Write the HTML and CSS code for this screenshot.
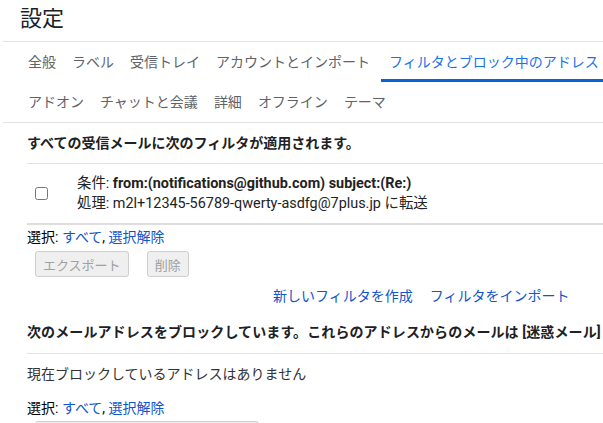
FILE: index.html
```html
<html>
<head>
    <title>設定</title>
    <link rel="stylesheet" href="styles.css">
</head>
<body>
    <div class="page">
    <h1 class="title">設定</h1>

    <div class="tabs">
        <div class="tab-row">
            <a class="tab">全般</a>
            <a class="tab">ラベル</a>
            <a class="tab">受信トレイ</a>
            <a class="tab">アカウントとインポート</a>
            <a class="tab active">フィルタとブロック中のアドレス</a>
        </div>
        <div class="tab-row">
            <a class="tab">アドオン</a>
            <a class="tab">チャットと会議</a>
            <a class="tab">詳細</a>
            <a class="tab">オフライン</a>
            <a class="tab">テーマ</a>
        </div>
    </div>

    <div class="content">
        <div class="section-head">すべての受信メールに次のフィルタが適用されます。</div>

        <div class="filter-row">
            <input type="checkbox" class="check">
            <div class="filter-text">
                <div>条件: <b>from:(notifications@github.com) subject:(Re:)</b></div>
                <div>処理: m2l+12345-56789-qwerty-asdfg@7plus.jp に転送</div>
            </div>
        </div>

        <div class="select-line">選択: <a class="link">すべて</a>, <a class="link">選択解除</a></div>
        <div class="buttons">
            <button class="btn" disabled>エクスポート</button>
            <button class="btn" disabled>削除</button>
        </div>

        <div class="links">
            <a class="link">新しいフィルタを作成</a>
            <a class="link">フィルタをインポート</a>
        </div>

        <div class="section-head blocked">次のメールアドレスをブロックしています。これらのアドレスからのメールは [迷惑メール]</div>

        <div class="empty">現在ブロックしているアドレスはありません</div>

        <div class="select-line second">選択: <a class="link">すべて</a>, <a class="link">選択解除</a></div>
        <div class="buttons second">
            <button class="btn" disabled>選択したアドレスのブロックを解除</button>
        </div>
    </div>
    </div>
</body>
</html>
```

FILE: styles.css
```css
body {
    margin: 0;
    overflow: hidden;
    background: #fff;
    font-family: Roboto, "Noto Sans CJK JP", sans-serif;
    color: #202124;
}

.page {
    width: 603px;
    height: 423px;
    overflow: hidden;
}

.title {
    margin: 0;
    height: 41px;
    padding-left: 20px;
    font-size: 22px;
    font-weight: normal;
    line-height: 37px;
    color: #202124;
}

/* tabs */
.tabs {
    margin-left: 3px;
    border-top: 1px solid #e3e3e3;
    border-bottom: 1px solid #e3e3e3;
}

.tab-row {
    display: flex;
    height: 40px;
    padding-left: 17px;
    white-space: nowrap;
}

.tab {
    display: flex;
    align-items: center;
    padding: 0 8px;
    font-size: 14px;
    color: #5f6368;
    border-bottom: 3px solid transparent;
    box-sizing: border-box;
}

.tab.active {
    margin-left: 3px;
    color: #1a73e8;
    border-bottom-color: #0b62d6;
}

/* filters */
.content {
    margin-left: 27px;
    font-size: 14px;
}

.section-head {
    height: 40px;
    line-height: 40px;
    font-weight: bold;
    white-space: nowrap;
    overflow: hidden;
    border-bottom: 1px solid #e3e3e3;
}

.filter-row {
    display: flex;
    align-items: center;
    height: 59px;
    border-bottom: 2px solid #dedede;
}

.check {
    width: 13px;
    height: 13px;
    margin: 0 29px 0 8px;
}

.filter-text {
    font-size: 14.4px;
    line-height: 20px;
    color: #222;
}

.select-line {
    padding-top: 3px;
    line-height: 18px;
    color: #000;
}

.link {
    color: #15c;
    cursor: pointer;
}

.buttons {
    display: flex;
    gap: 18px;
    margin-top: 5px;
    padding-left: 8px;
}

.btn {
    height: 26px;
    padding: 0 7px;
    font-family: Roboto, "Noto Sans CJK JP", sans-serif;
    font-size: 13px;
    color: #a0a0a0;
    background: #efefef;
    border: 1px solid #cfcfcf;
    border-radius: 3px;
}

.links {
    display: flex;
    gap: 17px;
    margin-top: 9px;
    padding-left: 246px;
    line-height: 20px;
}

.section-head.blocked {
    height: 41px;
    line-height: 41px;
    margin-top: 6px;
    letter-spacing: 0.1px;
}

.empty {
    margin-top: 10px;
    line-height: 20px;
    color: #333;
}

.select-line.second {
    margin-top: 15px;
    padding-top: 0;
}

.buttons.second {
    margin-top: 4px;
}
```
